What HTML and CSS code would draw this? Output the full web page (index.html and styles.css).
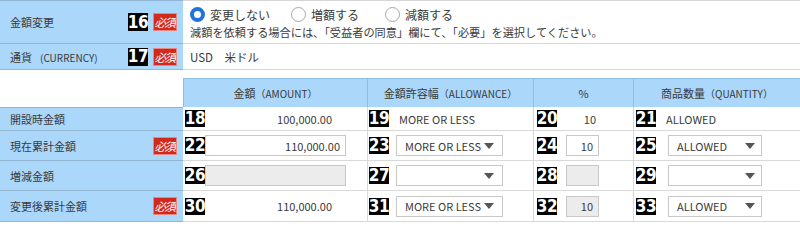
FILE: index.html
```html
<!DOCTYPE html>
<html lang="ja">
<head>
<meta charset="utf-8">
<title>金額変更</title>
<link rel="stylesheet" href="styles.css">
</head>
<body>
<div class="page">
  <div class="top">
    <div class="trow first">
      <div class="lab"><span class="ltxt">金額変更</span><span class="num">16</span><span class="req">必須</span></div>
      <div class="val v1">
        <div class="radios">
          <span class="opt o1"><span class="radio on"></span>変更しない</span>
          <span class="opt o2"><span class="radio"></span>増額する</span>
          <span class="opt"><span class="radio"></span>減額する</span>
        </div>
        <div class="note">減額を依頼する場合には、「受益者の同意」欄にて、「必要」を選択してください。</div>
      </div>
    </div>
    <div class="trow">
      <div class="lab"><span class="ltxt">通貨<small class="cur">(CURRENCY)</small></span><span class="num">17</span><span class="req">必須</span></div>
      <div class="val v2">USD　米ドル</div>
    </div>
  </div>

  <div class="grid">
    <div class="hd blank"></div>
    <div class="hd">金額<small>（AMOUNT）</small></div>
    <div class="hd">金額許容幅<small>（ALLOWANCE）</small></div>
    <div class="hd">%</div>
    <div class="hd">商品数量<small>（QUANTITY）</small></div>

    <div class="lc firstl"><span class="ltxt">開設時金額</span></div>
    <div class="dc c1"><span class="num">18</span><span class="amt">100,000.00</span></div>
    <div class="dc c2"><span class="num">19</span><span class="plain">MORE OR LESS</span></div>
    <div class="dc c3"><span class="num">20</span><span class="pct">10</span></div>
    <div class="dc c4"><span class="num">21</span><span class="plain">ALLOWED</span></div>

    <div class="lc"><span class="ltxt">現在累計金額</span><span class="req">必須</span></div>
    <div class="dc c1"><span class="num">22</span><span class="box amtbox">110,000.00</span></div>
    <div class="dc c2"><span class="num">23</span><span class="box sel s2"><span class="st">MORE OR LESS</span><span class="arr"></span></span></div>
    <div class="dc c3"><span class="num">24</span><span class="box pbox">10</span></div>
    <div class="dc c4"><span class="num">25</span><span class="box sel s4"><span class="st">ALLOWED</span><span class="arr"></span></span></div>

    <div class="lc"><span class="ltxt">増減金額</span></div>
    <div class="dc c1"><span class="num">26</span><span class="box amtbox dis"></span></div>
    <div class="dc c2"><span class="num">27</span><span class="box sel s2"><span class="st"></span><span class="arr"></span></span></div>
    <div class="dc c3"><span class="num">28</span><span class="box pbox dis"></span></div>
    <div class="dc c4"><span class="num">29</span><span class="box sel s4"><span class="st"></span><span class="arr"></span></span></div>

    <div class="lc"><span class="ltxt">変更後累計金額</span><span class="req">必須</span></div>
    <div class="dc c1"><span class="num">30</span><span class="amt">110,000.00</span></div>
    <div class="dc c2"><span class="num">31</span><span class="box sel s2"><span class="st">MORE OR LESS</span><span class="arr"></span></span></div>
    <div class="dc c3"><span class="num">32</span><span class="box pbox dis">10</span></div>
    <div class="dc c4"><span class="num">33</span><span class="box sel s4"><span class="st">ALLOWED</span><span class="arr"></span></span></div>
  </div>
</div>
</body>
</html>
```
FILE: styles.css
```css
* { box-sizing: border-box; }
html, body { margin: 0; padding: 0; background: #fff; }
body {
  font-family: "Noto Sans CJK JP", "Noto Sans", sans-serif;
  font-size: 11px;
  color: #3a3a3a;
  width: 800px;
  overflow: hidden;
}
small { font-size: 10px; }
.cur { margin-left: 8px; }

/* badges */
.num {
  display: inline-flex;
  align-items: center;
  justify-content: center;
  width: 20px;
  height: 17px;
  background: #000;
  color: #fff;
  font-family: "Liberation Sans Narrow", "DejaVu Sans Condensed", "DejaVu Sans", sans-serif;
  font-weight: bold;
  font-size: 17px;
  letter-spacing: -0.5px;
  line-height: 17px;
  flex: none;
}
.req {
  display: inline-flex;
  align-items: center;
  justify-content: center;
  width: 24px;
  height: 18px;
  background: #d3281c;
  border: 1px solid #e9867f;
  color: #fff;
  font-size: 11.5px;
  font-style: italic;
  letter-spacing: -1.5px;
  padding-right: 1px;
  overflow: hidden;
  flex: none;
}

/* top section */
.trow { display: flex; }
.trow.first { height: 44px; }
.trow:not(.first) { height: 26px; }
.lab {
  width: 183px;
  flex: none;
  background: #abd7fb;
  display: flex;
  align-items: center;
  padding: 0 6px 0 10px;
  border-bottom: 1px solid #93b6d2;
}
.trow.first .lab { border-top: 1px solid #93b6d2; }
.lab .num { margin-right: 5px; height: 18px; }
.ltxt { flex: 1; white-space: nowrap; }
.val {
  flex: 1;
  border-bottom: 1px solid #d6d6d6;
  padding-left: 7px;
}
.trow.first .val { border-top: 1px solid #d6d6d6; }
.v1 { padding-top: 5px; }
.v2 { display: flex; align-items: center; font-size: 11.5px; }
.radios { display: flex; align-items: center; height: 16px; }
.opt { display: inline-flex; align-items: center; font-size: 12px; }
.o1 { width: 101px; }
.o2 { width: 94px; }
.radio {
  width: 15px;
  height: 15px;
  border-radius: 50%;
  border: 1px solid #a9a9a9;
  background: #fff;
  margin-right: 5px;
  flex: none;
}
.radio.on {
  border: 4px solid #1f73da;
  background: #fff;
}
.note { margin-top: 3px; line-height: 15px; white-space: nowrap; font-size: 11.2px; }

/* grid section */
.grid {
  margin-top: 8px;
  display: grid;
  grid-template-columns: 183px 184px 166px 100px 167px;
  grid-template-rows: 29px 24px 30px 30px 31px;
}
.hd {
  background: #abd7fb;
  border-top: 1px solid #8fbde2;
  border-left: 1px solid #8fbde2;
  display: flex;
  align-items: center;
  justify-content: center;
  white-space: nowrap;
}
.hd.blank { background: #fff; border: none; }
.lc {
  background: #abd7fb;
  border-bottom: 1px solid #93b6d2;
  display: flex;
  align-items: center;
  padding: 0 6px 0 10px;
}
.lc.firstl { border-top: 1px solid #93b6d2; }
.dc {
  display: flex;
  align-items: center;
  border-bottom: 1px solid #d9d9d9;
  border-left: 1px solid #d9d9d9;
  white-space: nowrap;
}
.dc.c1 { padding-left: 2px; border-left: none; }
.dc.c2 { padding-left: 1px; }
.dc.c3 { padding-left: 3px; }
.dc.c4 { padding-left: 2px; }

.box {
  display: flex;
  align-items: center;
  height: 21px;
  border: 1px solid #c8c8c8;
  background: #fff;
}
.box.dis { background: #ececec; }
.amt {
  width: 141px;
  text-align: right;
  padding-right: 14px;
}
.amtbox {
  width: 141px;
  justify-content: flex-end;
  padding-right: 5px;
}
.plain { margin-left: 10px; }
.pct {
  width: 36px;
  margin-left: 6px;
  text-align: right;
  padding-right: 3px;
}
.pbox {
  width: 33px;
  margin-left: 9px;
  justify-content: flex-end;
  padding-right: 5px;
}
.sel { padding: 0 8px 0 8px; }
.s2 { width: 107px; margin-left: 7px; }
.s4 { width: 94px; margin-left: 12px; padding-right: 6px; }
.st { flex: 1; overflow: hidden; }
.arr {
  width: 0;
  height: 0;
  border-left: 5px solid transparent;
  border-right: 5px solid transparent;
  border-top: 6px solid #555;
  flex: none;
}
```
